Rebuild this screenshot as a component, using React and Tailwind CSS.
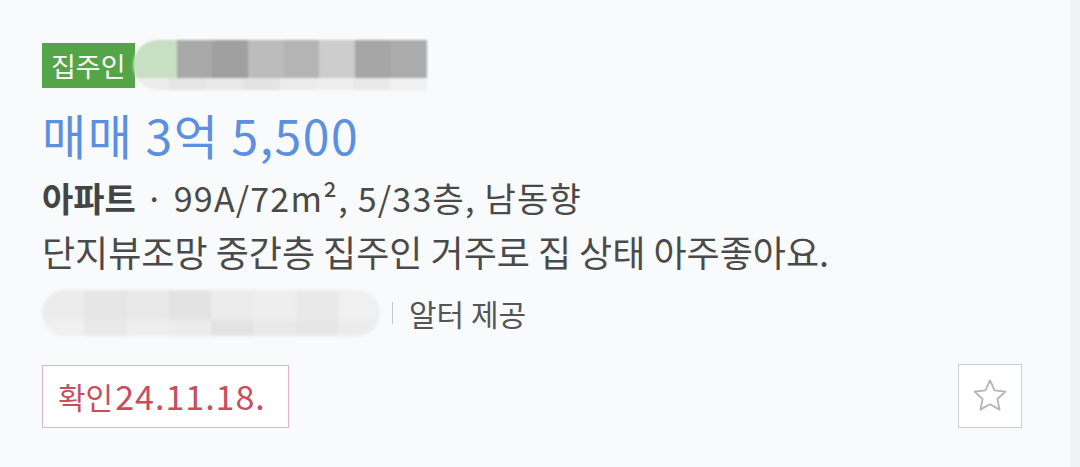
import React from 'react';

const topBlur = ['#a9a9a9', '#a0a0a0', '#bcbcbc', '#b4b4b4', '#cdcdcd', '#a6a6a6', '#acacac'];
const bottomBlur = ['#ececec', '#e6e6e6', '#e9e9e9', '#e3e3e3', '#ececec', '#eeeeee', '#e9e9e9', '#f0f0f0'];

const StarIcon = () => (
  <svg width="48" height="48" viewBox="0 0 24 24" fill="none" stroke="#b4b4b4" strokeWidth="0.9" strokeLinejoin="round">
    <path d="M12 4.2l2.3 5 5.4.6-4 3.7 1.1 5.3-4.8-2.7-4.8 2.7 1.1-5.3-4-3.7 5.4-.6z" />
  </svg>
);

export default function App() {
  return (
    <div className="flex h-[467px] w-[1080px] bg-[#f1f2f4] font-['Noto_Sans_CJK_KR','Noto_Sans',sans-serif]">
      <div className="flex w-[1070px] flex-col bg-[#f9fafc] pl-[42px] pr-[48px] pt-[40px]">
        {/* Owner tag + hidden name */}
        <div className="flex h-[50px] items-center">
          <span className="flex h-[45px] items-center bg-[#53a548] px-[9px] text-[27px] leading-none text-white">
            집주인
          </span>
          <div className="relative -ml-[2px] h-[50px] w-[294px] overflow-hidden rounded-l-full blur-[1px]">
            <div className="flex h-[38px]">
              <div className="w-[44px] bg-[#c9dfc3]" />
              {topBlur.map((c, i) => (
                <div key={i} className="flex-1" style={{ backgroundColor: c }} />
              ))}
            </div>
            <div className="flex h-[12px]">
              {bottomBlur.map((c, i) => (
                <div key={i} className="flex-1" style={{ backgroundColor: c }} />
              ))}
            </div>
          </div>
        </div>

        {/* Price */}
        <div className="mt-[18px] h-[52px] text-[48px] leading-[52px] tracking-[1.5px] text-[#5b8fdf]">매매 3억 5,500</div>

        {/* Type / size */}
        <div className="mt-[16px] h-[44px] text-[34px] leading-[44px] text-[#4a4a4a]">
          <span className="font-bold text-[#444]">아파트</span>
          <span className="tracking-[1.2px]"> · 99A/72m², 5/33층, 남동향</span>
        </div>

        {/* Description */}
        <div className="mt-[9px] h-[44px] text-[36px] leading-[44px] text-[#4a4a4a]">
          단지뷰조망 중간층 집주인 거주로 집 상태 아주좋아요.
        </div>

        {/* Agency */}
        <div className="mt-[18px] flex h-[44px] items-center">
          <div className="flex h-[46px] w-[338px] flex-col overflow-hidden rounded-full blur-[1.5px]">
            <div className="flex h-[30px]">
              {bottomBlur.map((c, i) => (
                <div key={i} className="flex-1" style={{ backgroundColor: c }} />
              ))}
            </div>
            <div className="flex h-[16px]">
              {bottomBlur.slice().reverse().map((c, i) => (
                <div key={i} className="flex-1" style={{ backgroundColor: c }} />
              ))}
            </div>
          </div>
          <span className="ml-[12px] h-[22px] w-px bg-[#c8c8c8]" />
          <span className="ml-[16px] text-[30px] leading-none text-[#555]">알터 제공</span>
        </div>

        {/* Confirm date + favorite */}
        <div className="mt-[29px] flex items-center justify-between">
          <div className="flex h-[63px] w-[247px] items-center border border-[#e5b5bb] bg-white pl-[15px] text-[#c84e5c]">
            <span className="text-[30px] leading-none">확인</span>
            <span className="ml-[2px] text-[34px] leading-none tracking-[1px]">24.11.18.</span>
          </div>
          <button className="flex h-[64px] w-[64px] items-center justify-center border border-[#cfcfcf] bg-white">
            <StarIcon />
          </button>
        </div>
      </div>
    </div>
  );
}
